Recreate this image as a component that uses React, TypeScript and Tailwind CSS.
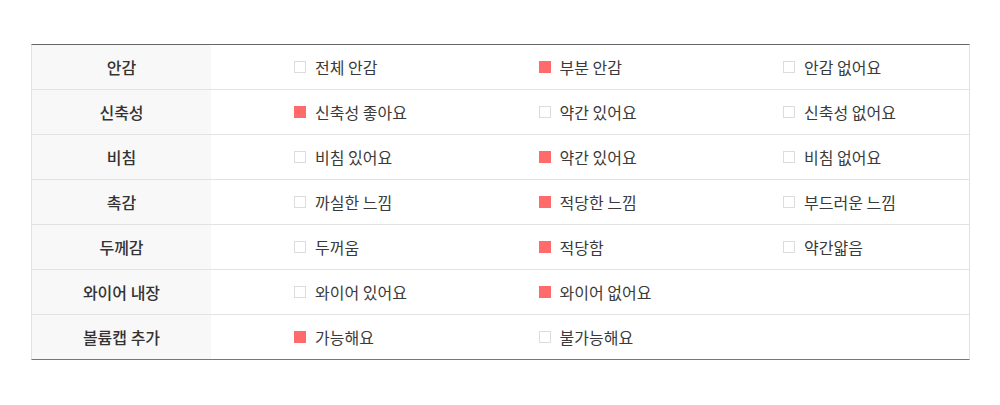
type Opt = { label: string; on: boolean };

const rows: { title: string; opts: Opt[] }[] = [
  { title: '안감', opts: [{ label: '전체 안감', on: false }, { label: '부분 안감', on: true }, { label: '안감 없어요', on: false }] },
  { title: '신축성', opts: [{ label: '신축성 좋아요', on: true }, { label: '약간 있어요', on: false }, { label: '신축성 없어요', on: false }] },
  { title: '비침', opts: [{ label: '비침 있어요', on: false }, { label: '약간 있어요', on: true }, { label: '비침 없어요', on: false }] },
  { title: '촉감', opts: [{ label: '까실한 느낌', on: false }, { label: '적당한 느낌', on: true }, { label: '부드러운 느낌', on: false }] },
  { title: '두께감', opts: [{ label: '두꺼움', on: false }, { label: '적당함', on: true }, { label: '약간얇음', on: false }] },
  { title: '와이어 내장', opts: [{ label: '와이어 있어요', on: false }, { label: '와이어 없어요', on: true }] },
  { title: '볼륨캡 추가', opts: [{ label: '가능해요', on: true }, { label: '불가능해요', on: false }] },
];

function Check({ on }: { on: boolean }) {
  return on ? (
    <span className="block shrink-0 w-3 h-3 bg-[#ff6b6b]" />
  ) : (
    <span className="block shrink-0 w-3 h-3 border border-[#dcdcdc] bg-white" />
  );
}

export default function App() {
  return (
    <div
      className="w-[1000px] h-[405px] bg-white pt-[44px] pl-[31px]"
      style={{ fontFamily: '"Noto Sans CJK KR", "Noto Sans", sans-serif' }}
    >
      <div className="w-[939px] border-t border-t-[#666] border-b border-b-[#777] border-x border-x-[#e2e2e2]">
        {rows.map((row, i) => (
          <div
            key={row.title}
            className={`flex ${i < rows.length - 1 ? 'h-[45px] border-b border-[#e2e2e2]' : 'h-[44px]'}`}
          >
            <div className="w-[179px] shrink-0 bg-[#f8f8f8] flex items-center justify-center text-[16px] font-medium text-[#333]">
              {row.title}
            </div>
            <div className="flex-1 flex items-center pl-[83px]">
              {row.opts.map((o) => (
                <div key={o.label} className="w-[244.5px] shrink-0 flex items-center gap-[9px] text-[16px] text-[#3a3a3a]">
                  <Check on={o.on} />
                  <span className="leading-none">{o.label}</span>
                </div>
              ))}
            </div>
          </div>
        ))}
      </div>
    </div>
  );
}
